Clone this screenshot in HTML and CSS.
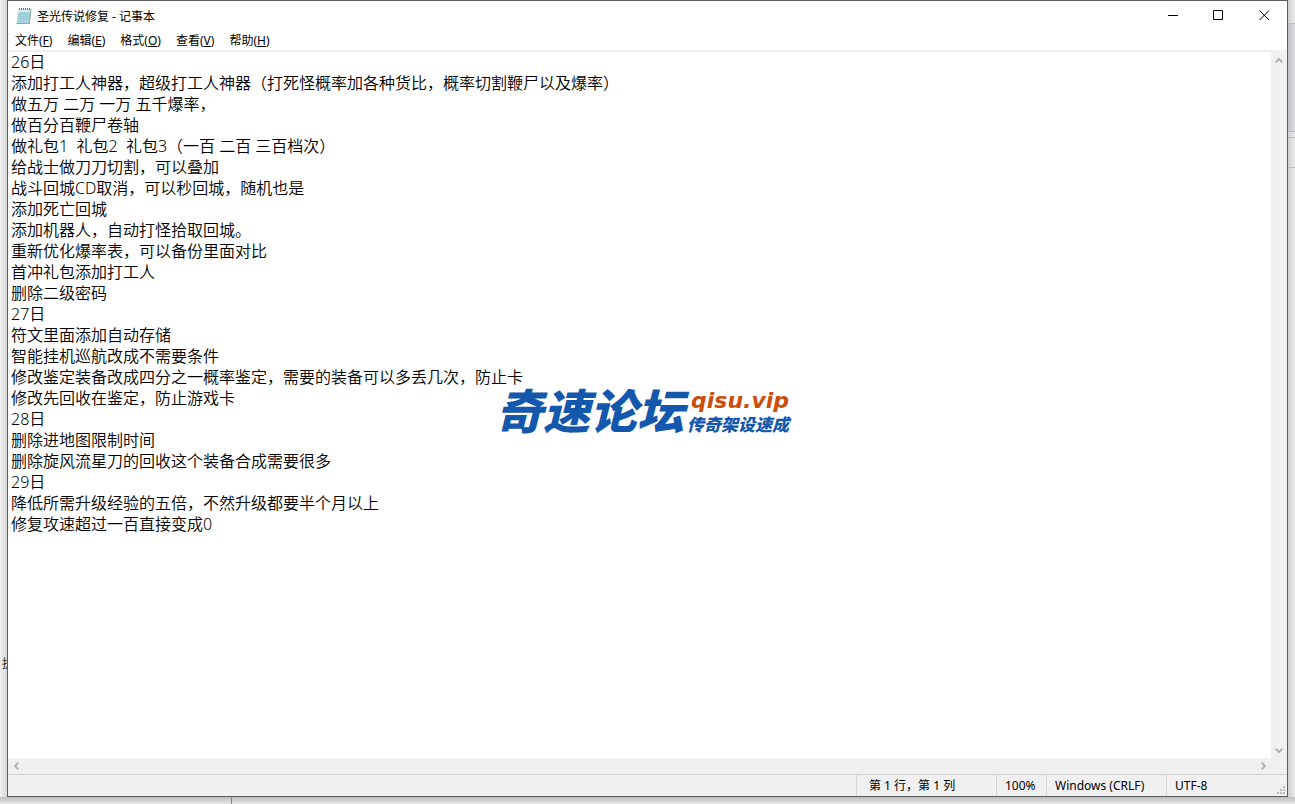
FILE: index.html
```html
<!DOCTYPE html>
<html lang="zh-CN">
<head>
    <meta charset="UTF-8">
    <meta name="viewport" content="width=device-width, initial-scale=1.0">
    <title>圣光传说修复 - 记事本</title>
    <link rel="stylesheet" href="styles.css">
</head>
<body>

    <div class="behind-left">
        <span class="behind-text">执</span>
    </div>
    <div class="behind-right">
        <div class="behind-title"></div>
        <div class="behind-bar"></div>
        <div class="behind-gap"></div>
        <div class="behind-row"></div>
    </div>
    <div class="behind-bottom"></div>

    <main class="window">
        <header class="titlebar">
            <svg class="app-icon" width="16" height="18" viewBox="0 0 16 18">
                <path d="M3 2h12l-1.500 14.500H.5z" fill="#a5d3df"/>
                <path d="M3 2h12l-.4 3H2.600z" fill="#d5edf2"/>
                <path d="M2.500 7h11M2.200 9.500h11M1.900 12h11" stroke="#8fc3d0" stroke-width=".6"/>
                <path d="M15 2l-1.500 14.500H.5" fill="none" stroke="#7899a2" stroke-width=".8"/>
                <path d="M3.500 1v2M5.500 1v2M7.500 1v2M9.500 1v2M11.500 1v2M13.500 1v2" stroke="#64777c"/>
            </svg>
            <h1 class="title">圣光传说修复 - 记事本</h1>
            <div class="window-buttons">
                <button class="window-btn" aria-label="最小化">
                    <svg width="11" height="11" viewBox="0 0 11 11"><path d="M1 5.500h10"/></svg>
                </button>
                <button class="window-btn" aria-label="最大化">
                    <svg width="11" height="11" viewBox="0 0 11 11"><path d="M.5.5h9v9h-9z"/></svg>
                </button>
                <button class="window-btn" aria-label="关闭">
                    <svg width="11" height="11" viewBox="0 0 11 11"><path d="M.5.500l9.500 9.500M10 .500L.5 10"/></svg>
                </button>
            </div>
        </header>

        <nav class="menubar">
            <button class="menu-item">文件(<u>F</u>)</button>
            <button class="menu-item">编辑(<u>E</u>)</button>
            <button class="menu-item">格式(<u>O</u>)</button>
            <button class="menu-item">查看(<u>V</u>)</button>
            <button class="menu-item">帮助(<u>H</u>)</button>
        </nav>

        <div class="editor">
            <textarea class="text" aria-label="文本编辑器" wrap="off" spellcheck="false">
26日
添加打工人神器，超级打工人神器（打死怪概率加各种货比，概率切割鞭尸以及爆率）
做五万 二万 一万 五千爆率，
做百分百鞭尸卷轴
做礼包1  礼包2  礼包3（一百 二百 三百档次）
给战士做刀刀切割，可以叠加
战斗回城CD取消，可以秒回城，随机也是
添加死亡回城
添加机器人，自动打怪拾取回城。
重新优化爆率表，可以备份里面对比
首冲礼包添加打工人
删除二级密码
27日
符文里面添加自动存储
智能挂机巡航改成不需要条件
修改鉴定装备改成四分之一概率鉴定，需要的装备可以多丢几次，防止卡
修改先回收在鉴定，防止游戏卡
28日
删除进地图限制时间
删除旋风流星刀的回收这个装备合成需要很多
29日
降低所需升级经验的五倍，不然升级都要半个月以上
修复攻速超过一百直接变成0</textarea>
            <div class="scroll scroll-y">
                <button class="scroll-btn" aria-label="向上"><svg width="8" height="7" viewBox="0 0 8 7"><path d="M.7 5.300L4 2l3.300 3.300"/></svg></button>
                <button class="scroll-btn" aria-label="向下"><svg width="8" height="7" viewBox="0 0 8 7"><path d="M.7 1.700L4 5l3.300-3.300"/></svg></button>
            </div>
            <div class="scroll scroll-x">
                <button class="scroll-btn" aria-label="向左"><svg width="7" height="8" viewBox="0 0 7 8"><path d="M5.300.7L2 4l3.300 3.300"/></svg></button>
                <button class="scroll-btn" aria-label="向右"><svg width="7" height="8" viewBox="0 0 7 8"><path d="M1.700.7L5 4 1.700 7.300"/></svg></button>
            </div>
        </div>

        <footer class="statusbar">
            <span class="status position">第 1 行，第 1 列</span>
            <span class="status zoom">100%</span>
            <span class="status eol">Windows (CRLF)</span>
            <span class="status encoding">UTF-8</span>
            <svg class="grip" width="9" height="9" viewBox="0 0 9 9"><path d="M6 0h2v2H6zM3 3h2v2H3zM6 3h2v2H6zM0 6h2v2H0zM3 6h2v2H3zM6 6h2v2H6z"/></svg>
        </footer>
    </main>

    <div class="watermark">
        <span class="mark-name">奇速论坛</span>
        <div class="mark-side">
            <span class="mark-url">qisu.vip</span>
            <span class="mark-slogan">传奇架设速成</span>
        </div>
    </div>

</body>
</html>
```
FILE: styles.css
```css
* {
    box-sizing: border-box;
}
body {
    margin: 0;
    height: 100vh;
    padding: 0 7px 7px 7px;
    display: flex;
    position: relative;
    overflow: hidden;
    background-color: #e9e9e9;
    color: #000;
    font-family: "Noto Sans", "Noto Sans CJK SC", sans-serif;
    font-size: 12px;
}
button {
    margin: 0;
    padding: 0;
    border: none;
    background: none;
    color: inherit;
    font: inherit;
}

/* Desktop behind the window */
.behind-left {
    position: absolute;
    left: 0;
    top: 0;
    bottom: 0;
    width: 16px;
    background: linear-gradient(to right, #f0f0f0, #d8d8d8 7px);
}
.behind-text {
    position: absolute;
    left: 2px;
    top: 656px;
    color: #333;
    line-height: 16px;
}
.behind-right {
    position: absolute;
    right: 0;
    top: 0;
    bottom: 0;
    width: 7px;
    background: linear-gradient(to right, #cfcfcf, #ebebeb);
}
.behind-title {
    height: 24px;
    border-bottom: 1px solid #bbb;
}
.behind-bar {
    height: 108px;
    background: linear-gradient(to right, #c2c2c8, #dcdce2);
    border-bottom: 1px solid #bbb;
}
.behind-gap {
    height: 6px;
    border-bottom: 1px solid #bbb;
}
.behind-row {
    height: 30px;
    border-bottom: 1px solid #bbb;
}
.behind-bottom {
    position: absolute;
    left: 0;
    right: 0;
    bottom: 0;
    height: 7px;
    background: linear-gradient(to right, transparent 231px, #888 231px, #888 232px, transparent 232px), linear-gradient(to bottom, #bdbdbd, #e6e6e6);
}

.window {
    position: relative;
    flex: 1;
    min-width: 0;
    display: flex;
    flex-direction: column;
    background-color: #fff;
    border: 1px solid #5c5c5c;
}

.titlebar {
    height: 29px;
    padding-left: 8px;
    display: flex;
    align-items: center;
}
.title {
    flex: 1;
    margin: 0 0 0 5px;
    font-size: 12px;
    font-weight: normal;
}
.window-buttons {
    display: flex;
}
.window-btn {
    width: 46px;
    height: 29px;
    display: flex;
    align-items: center;
    justify-content: center;
}
.window-btn path {
    fill: none;
    stroke: #000;
}

.menubar {
    height: 22px;
    padding-left: 7px;
    display: flex;
    align-items: center;
    gap: 15px;
    border-bottom: 2px solid #f0f0f0;
}
.menu-item u {
    text-underline-offset: 1px;
}

.editor {
    flex: 1;
    min-height: 0;
    display: grid;
    grid-template-columns: 1fr 16px;
    grid-template-rows: 1fr 16px;
    background-color: #f0f0f0;
}
.text {
    margin: 0;
    padding: 0 3px;
    border: none;
    outline: none;
    resize: none;
    overflow: hidden;
    background-color: #fff;
    color: #000;
    font-family: "Noto Sans", "Noto Sans CJK SC", sans-serif;
    font-size: 16px;
    font-weight: 350;
    line-height: 21px;
}
.scroll {
    display: flex;
    justify-content: space-between;
}
.scroll-y {
    flex-direction: column;
}
.scroll-btn {
    width: 16px;
    height: 16px;
    display: flex;
    align-items: center;
    justify-content: center;
}
.scroll-btn path {
    fill: none;
    stroke: #b4b4b4;
    stroke-width: 2;
}

.statusbar {
    position: relative;
    height: 22px;
    display: flex;
    justify-content: flex-end;
    background-color: #f0f0f0;
    border-top: 1px solid #d0d0d0;
}
.status {
    padding-left: 8px;
    border-left: 1px solid #d7d7d7;
    line-height: 22px;
    white-space: nowrap;
}
.position {
    width: 140px;
    padding-left: 12px;
}
.zoom {
    width: 50px;
}
.eol {
    width: 120px;
}
.encoding {
    width: 121px;
}
.grip {
    position: absolute;
    right: 1px;
    bottom: 1px;
    fill: #bcbcbc;
}

/* Forum mark over the text */
.watermark {
    position: absolute;
    left: 496px;
    top: 385px;
    display: flex;
    gap: 3px;
    color: #1358ad;
    font-family: "Noto Sans CJK SC", sans-serif;
    font-style: italic;
    font-weight: 900;
    white-space: nowrap;
    pointer-events: none;
}
.mark-name {
    font-size: 47px;
    line-height: 48px;
}
.mark-side {
    display: flex;
    flex-direction: column;
}
.mark-url {
    padding-left: 4px;
    color: #cc4e0c;
    font-family: "DejaVu Sans", sans-serif;
    font-size: 22px;
    line-height: 32px;
}
.mark-slogan {
    font-size: 17px;
    line-height: 14px;
}
```
